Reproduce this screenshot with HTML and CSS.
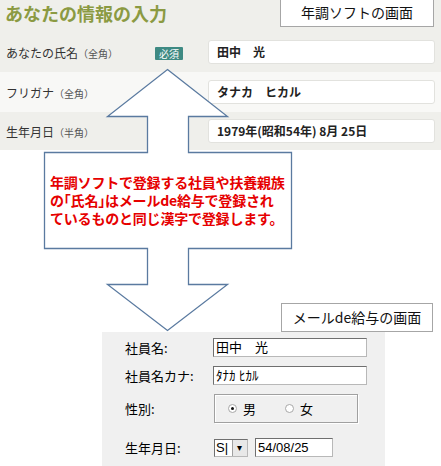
FILE: index.html
```html
<!DOCTYPE html>
<html lang="ja">
<head>
  <meta charset="UTF-8">
  <title>年調ソフトとメールde給与</title>
  <link rel="stylesheet" href="styles.css">
</head>
<body>
  <div class="page">
    <div class="nencho">
      <h1 class="nencho-title">あなたの情報の入力</h1>
      <div class="row">
        <div class="row-label">あなたの氏名<small>（全角）</small></div>
        <div class="row-badge"><span class="badge">必須</span></div>
        <div class="field">田中　光</div>
      </div>
      <div class="row row-light">
        <div class="row-label">フリガナ<small>（全角）</small></div>
        <div class="row-badge"></div>
        <div class="field">タナカ　ヒカル</div>
      </div>
      <div class="row row-last">
        <div class="row-label">生年月日<small>（半角）</small></div>
        <div class="row-badge"></div>
        <div class="field">1979年(昭和54年) 8月 25日</div>
      </div>
    </div>

    <div class="caption caption-top">年調ソフトの画面</div>

    <svg class="arrow" width="441" height="466" viewBox="0 0 441 466">
      <polygon points="167.5,69.5 227.5,116.5 188.5,116.5 188.5,152.5 291.5,152.5 291.5,248.5 188.5,248.5 188.5,284.5 227.5,284.5 167.5,330.5 107.5,284.5 147.5,284.5 147.5,248.5 44.5,248.5 44.5,152.5 147.5,152.5 147.5,116.5 107.5,116.5" fill="#fff" stroke="#5a7aa0" stroke-width="1.3"/>
    </svg>
    <div class="callout">年調ソフトで登録する社員や扶養親族<br>の「氏名」はメールde給与で登録され<br>ているものと同じ漢字で登録します。</div>

    <div class="mail">
      <div class="caption caption-mail">メールde給与の画面</div>
      <div class="panel">
        <div class="prow">
          <div class="plabel">社員名:</div>
          <div class="pinput pinput-wide">田中　光</div>
        </div>
        <div class="prow">
          <div class="plabel">社員名カナ:</div>
          <div class="pinput pinput-wide">ﾀﾅｶ ﾋｶﾙ</div>
        </div>
        <div class="prow prow-group">
          <div class="plabel">性別:</div>
          <div class="groupbox">
            <span class="radio checked"></span><span class="radio-text">男</span>
            <span class="radio radio-second"></span><span class="radio-text">女</span>
          </div>
        </div>
        <div class="prow prow-date">
          <div class="plabel">生年月日:</div>
          <div class="combo"><span class="combo-text">S|</span><span class="combo-btn">▾</span></div>
          <div class="pinput pinput-date">54/08/25</div>
        </div>
      </div>
    </div>
  </div>
</body>
</html>
```

FILE: styles.css
```css
body {
  margin: 0;
  background: #fff;
  font-family: "Noto Sans CJK JP", "Noto Sans", sans-serif;
}
.page {
  position: relative;
  width: 441px;
  height: 466px;
  overflow: hidden;
}
.nencho {
  background: #efefeb;
  height: 150px;
}
.nencho-title {
  margin: 0;
  height: 32px;
  padding-left: 5px;
  font-size: 18px;
  line-height: 26px;
  font-weight: bold;
  color: #8b9a42;
}
.row {
  display: flex;
  align-items: center;
  height: 40px;
}
.row-light {
  background: #f8f8f6;
}
.row-last {
  height: 38px;
}
.row-label {
  width: 149px;
  padding-left: 6px;
  font-size: 12px;
  color: #333;
}
.row-label small {
  font-size: 10px;
  color: #555;
}
.row-badge {
  width: 53px;
}
.badge {
  display: inline-block;
  background: #3e8a83;
  color: #fff;
  font-size: 10px;
  line-height: 13px;
  padding: 0 4px;
  border-radius: 1px;
  position: relative;
  top: -1px;
}
.field {
  width: 217px;
  height: 22px;
  line-height: 22px;
  padding-left: 8px;
  background: #fff;
  border: 1px solid #e2e2de;
  border-radius: 3px;
  font-size: 12px;
  font-weight: bold;
  color: #222;
}
.caption {
  background: #fff;
  border: 1px solid #a6a6a6;
  font-size: 14px;
  color: #111;
  text-align: center;
  box-sizing: border-box;
}
.caption-top {
  position: absolute;
  left: 280px;
  top: 0;
  width: 154px;
  height: 27px;
  line-height: 25px;
  border-top: none;
}
.arrow {
  position: absolute;
  left: 0;
  top: 0;
  pointer-events: none;
}
.callout {
  position: absolute;
  left: 44px;
  top: 153px;
  width: 247px;
  padding: 20px 0 0 6px;
  box-sizing: border-box;
  font-size: 14px;
  line-height: 18px;
  font-weight: bold;
  color: #e60000;
  white-space: nowrap;
  letter-spacing: -0.2px;
  font-feature-settings: "halt";
}
.mail {
  padding-top: 153px;
}
.caption-mail {
  margin-left: 281px;
  width: 152px;
  height: 29px;
  line-height: 27px;
}
.panel {
  margin-left: 102px;
  width: 283px;
  height: 134px;
  background: #f0f0f0;
  padding: 6px 0 0 23px;
  box-sizing: border-box;
  font-size: 13px;
  color: #000;
}
.prow {
  display: flex;
  align-items: center;
  height: 19px;
  margin-bottom: 9px;
}
.prow-group {
  height: 29px;
  margin-top: 5px;
  margin-bottom: 15px;
}
.plabel {
  width: 88px;
}
.pinput {
  height: 17px;
  line-height: 17px;
  padding-left: 2px;
  background: #fff;
  border: 1px solid;
  border-color: #6f6f6f #b8b8b8 #b8b8b8 #6f6f6f;
  font-family: "Liberation Sans", "Noto Sans CJK JP", sans-serif;
}
.pinput-wide {
  width: 150px;
}
.pinput-date {
  width: 74px;
  margin-left: 7px;
}
.groupbox {
  display: flex;
  align-items: center;
  width: 142px;
  height: 27px;
  margin-left: 1px;
  border: 1px solid #a0a0a0;
  box-shadow: inset 1px 1px 0 #fff, 1px 1px 0 #fff;
}
.radio {
  width: 9px;
  height: 9px;
  margin-left: 13px;
  border-radius: 50%;
  background: #fff;
  border: 1px solid #a8a8a8;
  box-sizing: border-box;
  position: relative;
}
.radio.checked::after {
  content: "";
  position: absolute;
  left: 2px;
  top: 2px;
  width: 3px;
  height: 3px;
  border-radius: 50%;
  background: #111;
}
.radio-second {
  margin-left: 29px;
}
.radio-text {
  margin-left: 6px;
}
.combo {
  display: flex;
  width: 34px;
  height: 18px;
  margin-left: 1px;
  background: #fff;
  border: 1px solid;
  border-color: #6f6f6f #b8b8b8 #b8b8b8 #6f6f6f;
  box-sizing: border-box;
  font-family: "Liberation Sans", sans-serif;
}
.combo-text {
  width: 17px;
  line-height: 16px;
  padding-left: 1px;
}
.combo-btn {
  width: 15px;
  height: 16px;
  background: #e8e8e8;
  border-left: 1px solid #a0a0a0;
  font-size: 10px;
  line-height: 16px;
  text-align: center;
}
```
